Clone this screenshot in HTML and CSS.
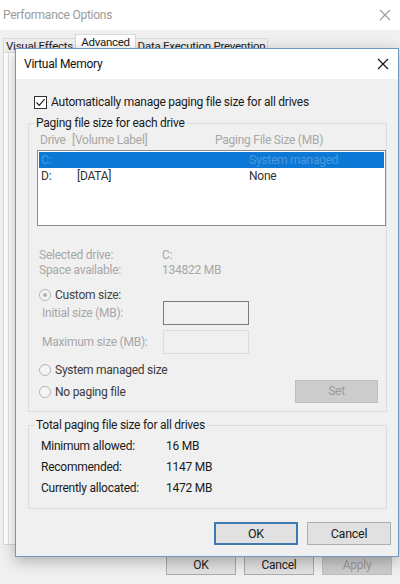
FILE: index.html
```html
<!DOCTYPE html>
<html>
<head>
<meta charset="utf-8">
<link rel="stylesheet" href="styles.css">
</head>
<body>
<div class="screen">
  <div class="bgwin">
    <div class="bg-title">
      <span class="bg-title-text">Performance Options</span>
      <svg class="bg-close" width="12" height="12" viewBox="0 0 12 12"><path d="M1 1L11 11M11 1L1 11" stroke="#9a9a9a" stroke-width="1.1" fill="none"/></svg>
    </div>
    <div class="bg-body">
      <div class="tabs">
        <div class="tab tab-ve">Visual Effects</div>
        <div class="tab tab-active">Advanced</div>
        <div class="tab tab-dep">Data Execution Prevention</div>
      </div>
      <div class="tabpage">
        <div class="tabpage-inner"></div>
      </div>
      <div class="bg-buttons">
        <div class="bbtn">OK</div>
        <div class="bbtn">Cancel</div>
        <div class="bbtn bbtn-dis">Apply</div>
      </div>
    </div>
  </div>

  <div class="dialog">
    <div class="dlg-title">
      <span>Virtual Memory</span>
      <svg class="dlg-close" width="12" height="12" viewBox="0 0 12 12"><path d="M1 1L11 11M11 1L1 11" stroke="#111" stroke-width="1.1" fill="none"/></svg>
    </div>
    <div class="dlg-body">
      <div class="check-row">
        <span class="checkbox"><svg width="11" height="11" viewBox="0 0 11 11"><path d="M1.5 5.5L4.2 8.3L9.6 2.2" stroke="#222" stroke-width="1.2" fill="none"/></svg></span>
        <span>Automatically manage paging file size for all drives</span>
      </div>

      <fieldset class="group group1">
        <legend>Paging file size for each drive</legend>
        <div class="list-head">
          <span class="col-drive">Drive</span><span class="col-label">[Volume Label]</span><span class="col-size">Paging File Size (MB)</span>
        </div>
        <div class="listbox">
          <div class="lrow lrow-sel"><span class="c1">C:</span><span class="c2"></span><span class="c3">System managed</span></div>
          <div class="lrow"><span class="c1">D:</span><span class="c2">[DATA]</span><span class="c3">None</span></div>
        </div>
        <div class="info first"><span class="ilabel">Selected drive:</span><span>C:</span></div>
        <div class="info"><span class="ilabel">Space available:</span><span>134822 MB</span></div>

        <div class="radio-row custom"><span class="radio radio-on"></span><span>Custom size:</span></div>
        <div class="size-row r1"><span class="slabel">Initial size (MB):</span><span class="input input-dark"></span></div>
        <div class="size-row r2"><span class="slabel">Maximum size (MB):</span><span class="input"></span></div>
        <div class="radio-row sys"><span class="radio"></span><span>System managed size</span></div>
        <div class="last-row">
          <div class="radio-row nop"><span class="radio"></span><span>No paging file</span></div>
          <div class="setbtn">Set</div>
        </div>
      </fieldset>

      <fieldset class="group group2">
        <legend>Total paging file size for all drives</legend>
        <div class="trow first"><span class="tlabel">Minimum allowed:</span><span>16 MB</span></div>
        <div class="trow"><span class="tlabel">Recommended:</span><span>1147 MB</span></div>
        <div class="trow"><span class="tlabel">Currently allocated:</span><span>1472 MB</span></div>
      </fieldset>

      <div class="dlg-buttons">
        <div class="btn btn-default">OK</div>
        <div class="btn">Cancel</div>
      </div>
    </div>
  </div>
</div>
</body>
</html>
```

FILE: styles.css
```css
* { box-sizing: border-box; }
html, body { margin: 0; padding: 0; }
body {
  width: 400px;
  height: 584px;
  overflow: hidden;
  font-family: Roboto, "Noto Sans", sans-serif;
  font-size: 12px;
  letter-spacing: -0.25px;
  color: #1a1a1a;
  background: #f0f0f0;
}
.screen {
  position: relative;
  width: 400px;
  height: 584px;
}

/* background window */
.bgwin {
  display: flex;
  flex-direction: column;
  height: 584px;
}
.bg-title {
  height: 30px;
  background: #ffffff;
  display: flex;
  align-items: center;
  justify-content: space-between;
  padding: 0 9px 0 3px;
  color: #9a9a9a;
  font-size: 12px;
}
.bg-body {
  flex: 1;
  background: #f0f0f0;
  display: flex;
  flex-direction: column;
  padding: 4px 5px 0 3px;
}
.tabs {
  display: flex;
  height: 18px;
  align-items: flex-end;
}
.tab {
  flex: none;
  height: 14px;
  border: 1px solid #d9d9d9;
  border-bottom: none;
  background: #f0f0f0;
  font-size: 11.5px;
  line-height: 14px;
  color: #222;
  text-align: center;
  margin-right: -1px;
}
.tab-ve { width: 73px; }
.tab-dep { width: 133px; }
.tab-active {
  width: 61px;
  height: 18px;
  background: #ffffff;
  line-height: 15px;
}
.tabpage {
  height: 493px;
  background: #ffffff;
  border: 1px solid #d9d9d9;
  padding: 0 0 0 4px;
}
.tabpage-inner {
  height: 100%;
  border-left: 1px solid #e2e2e2;
}
.bg-buttons {
  display: flex;
  justify-content: flex-end;
  gap: 8px;
  padding: 11px 3px 0 0;
}
.bbtn {
  width: 70px;
  height: 19px;
  border: 1px solid #adadad;
  background: #e1e1e1;
  text-align: center;
  line-height: 17px;
  font-size: 12px;
  color: #222;
}
.bbtn-dis {
  background: #cccccc;
  border-color: #bfbfbf;
  color: #9a9a9a;
}

/* dialog */
.dialog {
  position: absolute;
  left: 15px;
  top: 48px;
  width: 384px;
  height: 509px;
  border: 1px solid #6e98bd;
  background: #f0f0f0;
  box-shadow: 0 4px 14px rgba(0,0,0,0.28);
  display: flex;
  flex-direction: column;
}
.dlg-title {
  height: 30px;
  background: #ffffff;
  display: flex;
  align-items: center;
  justify-content: space-between;
  padding: 0 9px 0 8px;
  font-size: 12px;
  color: #111;
}
.dlg-body {
  flex: 1;
  padding: 14px 11px 0 12px;
  display: flex;
  flex-direction: column;
}
.check-row {
  display: flex;
  align-items: center;
  height: 16px;
  gap: 4px;
  padding-left: 6px;
  margin-top: 1px;
}
.checkbox {
  width: 13px;
  height: 13px;
  border: 1px solid #333;
  background: #fff;
  display: flex;
  align-items: center;
  justify-content: center;
}

.group {
  margin: 0;
  padding: 0 0 0 10px;
  border: 1px solid #dcdcdc;
  min-width: 0;
}
.group legend {
  margin-left: -5px;
  padding: 0 2px;
  line-height: 16px;
  height: 16px;
  color: #1a1a1a;
}
.group1 {
  margin-top: 5px;
  height: 297px;
  padding-right: 0;
}
.list-head {
  margin-top: 2px;
  height: 15px;
  line-height: 15px;
  color: #a7a7a7;
  display: flex;
  padding-left: 1px;
}
.col-drive { width: 32px; }
.col-label { width: 143px; }
.listbox {
  margin-top: 2px;
  margin-left: -2px;
  width: 349px;
  height: 76px;
  border: 1px solid #8a8d93;
  background: #ffffff;
  padding: 1px;
}
.lrow {
  height: 16px;
  line-height: 16px;
  display: flex;
  color: #333;
}
.lrow-sel {
  background: #0a78d4;
  color: #4f98dd;
}
.c1 { width: 38px; padding-left: 2px; }
.c2 { width: 172px; }
.info {
  height: 15px;
  line-height: 15px;
  display: flex;
  color: #a7a7a7;
}
.info.first { margin-top: 22px; }
.ilabel { width: 123px; }
.radio-row {
  display: flex;
  align-items: center;
  height: 16px;
  gap: 4px;
  color: #3a3a3a;
}
.radio {
  width: 12px;
  height: 12px;
  border: 1px solid #b5b5b5;
  border-radius: 50%;
  background: #f4f4f4;
  position: relative;
  flex: none;
}
.radio-on::after {
  content: "";
  position: absolute;
  left: 3px;
  top: 3px;
  width: 4px;
  height: 4px;
  border-radius: 50%;
  background: #b0b0b0;
}
.custom { margin-top: 9px; color: #444; }
.size-row {
  display: flex;
  align-items: center;
  height: 24px;
  color: #a7a7a7;
}
.size-row .slabel { width: 124px; padding-left: 3px; }
.r1 { margin-top: -2px; }
.r2 { margin-top: 5px; }
.input {
  width: 86px;
  height: 24px;
  border: 1px solid #dcdcdc;
  background: #f0f0f0;
}
.input-dark { border-color: #7a7a7a; }
.sys { margin-top: 8px; }
.last-row {
  display: flex;
  justify-content: space-between;
  align-items: flex-start;
  padding-right: 8px;
}
.nop { margin-top: 6px; }
.setbtn {
  margin-top: 2px;
  width: 83px;
  height: 23px;
  background: #cccccc;
  border: 1px solid #bfbfbf;
  color: #9a9a9a;
  text-align: center;
  line-height: 21px;
}

.group2 {
  margin-top: 5px;
  height: 92px;
  padding-left: 12px;
}
.group2 legend { margin-left: -7px; }
.trow {
  height: 21px;
  line-height: 21px;
  display: flex;
  color: #1a1a1a;
}
.trow.first { margin-top: 3px; }
.tlabel { width: 125px; }

.dlg-buttons {
  margin-top: 13px;
  display: flex;
  justify-content: flex-end;
  gap: 9px;
  margin-right: -4px;
}
.btn {
  width: 84px;
  height: 23px;
  border: 1px solid #adadad;
  background: #e1e1e1;
  text-align: center;
  line-height: 21px;
  font-size: 12.5px;
  color: #1a1a1a;
}
.btn-default {
  border: 2px solid #3d7ab3;
  line-height: 19px;
}
```
